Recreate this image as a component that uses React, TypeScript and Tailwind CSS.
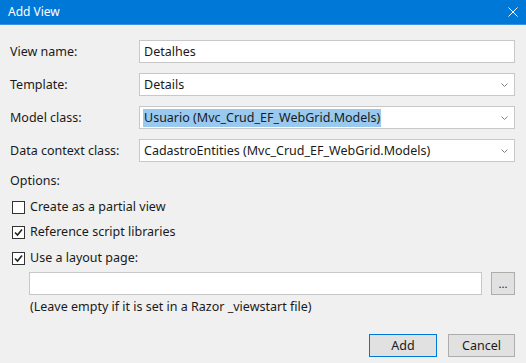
import React from 'react'

function Chevron() {
  return (
    <svg width="7" height="4" viewBox="0 0 7 4" className="shrink-0">
      <path d="M0.5 0.5 L3.5 3.5 L6.5 0.5" fill="none" stroke="#808080" strokeWidth="1" />
    </svg>
  )
}

function Check({ checked }: { checked: boolean }) {
  return (
    <span className="flex h-[13px] w-[13px] shrink-0 items-center justify-center border border-[#333] bg-white">
      {checked && (
        <svg width="9" height="9" viewBox="0 0 9 9">
          <path d="M1 4.5 L3.5 7 L8 1.5" fill="none" stroke="#222" strokeWidth="1.6" />
        </svg>
      )}
    </span>
  )
}

function Field({ label, children }: { label: string; children: React.ReactNode }) {
  return (
    <div className="flex h-[23px] items-center">
      <span className="w-[129px] shrink-0">{label}</span>
      {children}
    </div>
  )
}

function Combo({ value, selected }: { value: string; selected?: boolean }) {
  return (
    <div className="flex h-[23px] flex-1 items-center justify-between border border-[#c8c8c8] bg-white pl-[3px] pr-[6px]">
      <span className={selected ? 'bg-[#99c9ef] px-px' : 'px-px'}>{value}</span>
      <Chevron />
    </div>
  )
}

export default function App() {
  return (
    <div
      className="h-[363px] w-[526px] bg-[#f0f0f0] text-[12.5px] leading-[18px] text-[#1a1a1a]"
      style={{ fontFamily: '"Noto Sans", "Open Sans", sans-serif' }}
    >
      <div className="flex h-[24px] items-center justify-between bg-[#0078d7] pl-[8px] pr-[8px] text-[12px] text-white">
        <span>Add View</span>
        <svg width="10" height="10" viewBox="0 0 10 10">
          <path d="M0.5 0.5 L9.5 9.5 M9.5 0.5 L0.5 9.5" stroke="white" strokeWidth="1" />
        </svg>
      </div>
      <div className="h-px bg-[#3d94de]" />

      <div className="flex flex-col pl-[10px] pr-[11px] pt-[15px]">
        <div className="flex flex-col gap-[10px]">
          <Field label="View name:">
            <div className="flex h-[23px] flex-1 items-center border border-[#c8c8c8] bg-white pl-[4px]">
              Detalhes
            </div>
          </Field>
          <Field label="Template:">
            <Combo value="Details" />
          </Field>
          <Field label="Model class:">
            <Combo value="Usuario (Mvc_Crud_EF_WebGrid.Models)" selected />
          </Field>
          <Field label="Data context class:">
            <Combo value="CadastroEntities (Mvc_Crud_EF_WebGrid.Models)" />
          </Field>
        </div>

        <div className="mt-[10px]">Options:</div>
        <div className="mt-[8px] flex flex-col pl-[2px]">
          <label className="flex h-[18px] items-center gap-[5px]">
            <Check checked={false} />
            <span>Create as a partial view</span>
          </label>
          <label className="mt-[7px] flex h-[18px] items-center gap-[5px]">
            <Check checked />
            <span>Reference script libraries</span>
          </label>
          <label className="mt-[8px] flex h-[18px] items-center gap-[5px]">
            <Check checked />
            <span>Use a layout page:</span>
          </label>
        </div>

        <div className="mt-[5px] flex items-center pl-[19px]">
          <div className="h-[23px] flex-1 border border-[#c8c8c8] bg-white" />
          <div className="ml-[9px] flex h-[23px] w-[24px] items-end justify-center border border-[#adadad] bg-[#e1e1e1] pb-[5px] text-[11px] leading-none">
            ...
          </div>
        </div>
        <div className="mt-[3px] pl-[20px]">(Leave empty if it is set in a Razor _viewstart file)</div>

        <div className="mt-[18px] flex justify-end gap-[11px]">
          <button className="h-[23px] w-[68px] border border-[#0078d7] bg-[#e1e1e1]">Add</button>
          <button className="h-[23px] w-[67px] border border-[#adadad] bg-[#e1e1e1]">Cancel</button>
        </div>
      </div>
    </div>
  )
}
